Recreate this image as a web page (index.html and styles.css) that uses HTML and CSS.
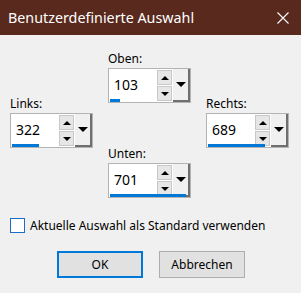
FILE: index.html
```html
<!DOCTYPE html>
<html lang="de">
  <head>
    <meta charset="UTF-8" />
    <title>Benutzerdefinierte Auswahl</title>
    <link rel="stylesheet" href="styles.css">
  </head>
  <body>
    <div class="dialog">
      <div class="titlebar">
        <span class="title">Benutzerdefinierte Auswahl</span>
        <svg class="close" width="12" height="12" viewBox="0 0 12 12">
          <path d="M0.5 0.5 L11.5 11.5 M11.5 0.5 L0.5 11.5" stroke="#fff" stroke-width="1.1" />
        </svg>
      </div>

      <div class="content">
        <div class="spins">
          <div class="field links">
            <label>Links:</label>
            <div class="spinbox">
              <div class="edit">
                <span class="value">322</span>
                <span class="bar" style="width: 27px"></span>
              </div>
              <div class="arrows">
                <span class="btn"><span class="tri up"></span></span>
                <span class="btn"><span class="tri down"></span></span>
              </div>
              <div class="drop"><span class="tri big"></span></div>
            </div>
          </div>

          <div class="middle">
            <div class="field">
              <label>Oben:</label>
              <div class="spinbox">
                <div class="edit">
                  <span class="value">103</span>
                  <span class="bar" style="width: 10px"></span>
                </div>
                <div class="arrows">
                  <span class="btn"><span class="tri up"></span></span>
                  <span class="btn"><span class="tri down"></span></span>
                </div>
                <div class="drop"><span class="tri big"></span></div>
              </div>
            </div>

            <div class="field">
              <label>Unten:</label>
              <div class="spinbox">
                <div class="edit">
                  <span class="value">701</span>
                  <span class="bar" style="width: 76px"></span>
                </div>
                <div class="arrows">
                  <span class="btn"><span class="tri up"></span></span>
                  <span class="btn"><span class="tri down"></span></span>
                </div>
                <div class="drop"><span class="tri big"></span></div>
              </div>
            </div>
          </div>

          <div class="field rechts">
            <label>Rechts:</label>
            <div class="spinbox">
              <div class="edit">
                <span class="value">689</span>
                <span class="bar" style="width: 57px"></span>
              </div>
              <div class="arrows">
                <span class="btn"><span class="tri up"></span></span>
                <span class="btn"><span class="tri down"></span></span>
              </div>
              <div class="drop"><span class="tri big"></span></div>
            </div>
          </div>
        </div>

        <div class="check">
          <span class="checkbox"></span>
          <span>Aktuelle Auswahl als Standard verwenden</span>
        </div>

        <div class="buttons">
          <button class="button default">OK</button>
          <button class="button">Abbrechen</button>
        </div>
      </div>
    </div>
  </body>
</html>
```

FILE: styles.css
```css
body {
  margin: 0;
  font-family: "Noto Sans", "Liberation Sans", sans-serif;
  font-size: 12px;
  color: #000;
  background-color: #f0f0f0;
}

.dialog {
  width: 301px;
  height: 293px;
  background-color: #f0f0f0;
}

.titlebar {
  height: 35px;
  background-color: #59291d;
  display: flex;
  align-items: center;
  justify-content: space-between;
  padding: 0 12px 0 8px;
  box-sizing: border-box;
}

.title {
  color: #fff;
  font-size: 14.3px;
}

.content {
  padding: 16px 0 0 10px;
}

.spins {
  display: flex;
  gap: 15px;
}

.middle {
  display: flex;
  flex-direction: column;
  gap: 43px;
}

.links,
.rechts {
  margin-top: 45px;
}

.field label {
  display: block;
  height: 15px;
  line-height: 15px;
  margin-bottom: 2px;
}

.spinbox {
  width: 83px;
  height: 35px;
  box-sizing: border-box;
  border: 1px solid #b4b4b4;
  background-color: #fff;
  display: flex;
}

.edit {
  flex: 1;
  position: relative;
}

.value {
  display: block;
  padding: 8px 0 0 5px;
  font-size: 14px;
  line-height: 16px;
}

.bar {
  position: absolute;
  left: 1px;
  bottom: 0;
  height: 3px;
  background-color: #0078d7;
}

.arrows {
  width: 15px;
  display: flex;
  flex-direction: column;
  gap: 1px;
  padding: 1px 0;
}

.btn {
  flex: 1;
  background-color: #e6e6e6;
  border: 1px solid #c8c8c8;
  display: flex;
  align-items: center;
  justify-content: center;
}

.drop {
  width: 15px;
  background-color: #f0f0f0;
  border-right: 2px solid #6f6f6f;
  border-bottom: 2px solid #6f6f6f;
  display: flex;
  align-items: center;
  justify-content: center;
  margin-left: 1px;
}

.tri {
  width: 0;
  height: 0;
  border-left: 4px solid transparent;
  border-right: 4px solid transparent;
}

.tri.up {
  border-bottom: 4px solid #000;
}

.tri.down {
  border-top: 4px solid #000;
}

.tri.big {
  border-left-width: 5px;
  border-right-width: 5px;
  border-top: 5px solid #000;
}

.check {
  display: flex;
  align-items: center;
  gap: 5px;
  margin-top: 19px;
}

.checkbox {
  width: 13px;
  height: 13px;
  border: 1px solid #1a6fc4;
  background-color: #fff;
}

.buttons {
  display: flex;
  gap: 16px;
  margin: 17px 0 0 47px;
}

.button {
  width: 86px;
  height: 27px;
  font-family: inherit;
  font-size: 12px;
  background-color: #e1e1e1;
  border: 1px solid #adadad;
  padding: 0;
}

.button.default {
  border: 2px solid #0078d7;
}
```
